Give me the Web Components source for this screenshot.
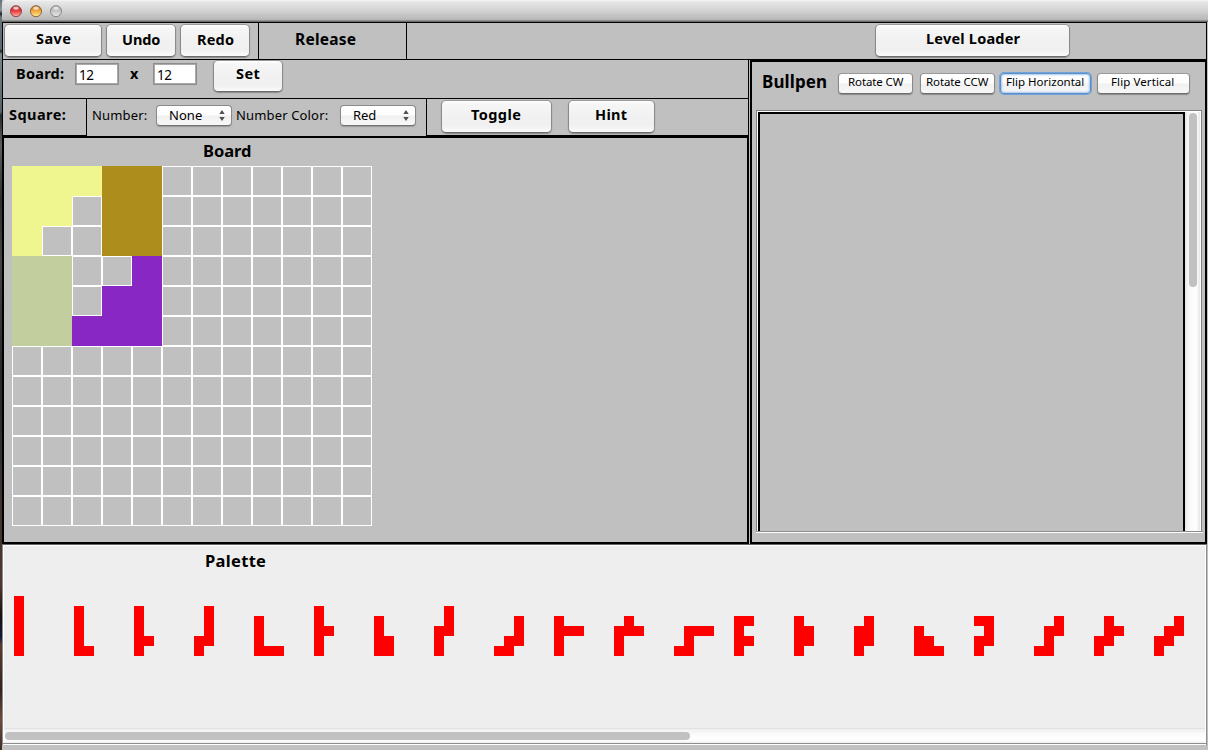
<!DOCTYPE html>
<html lang="en">
<head>
<meta charset="utf-8">
<title>Level Editor</title>
<style>
html,body{margin:0;height:100%;overflow:hidden}
body{font-family:"Noto Sans","Open Sans",sans-serif;color:#000;background:#c0c0c0}
</style>
</head>
<body>
<level-editor></level-editor>
<script>
function define(name, html, setup) {
  const template = document.createElement('template');
  template.innerHTML = html;
  customElements.define(name, class extends HTMLElement {
    connectedCallback() {
      if (this.shadowRoot) return;
      this.attachShadow({ mode: 'open' }).append(template.content.cloneNode(true));
      if (setup) setup(this, this.shadowRoot);
    }
  });
}

/* Text set to a fixed measure by tracking: w = width, s = size, b = bold */
define('ui-text', `<style>
:host{display:block;flex:none;white-space:pre;line-height:20px;height:20px}
:host([b]:not([s])){line-height:18px}
span{display:inline-block}
</style><span><slot></slot></span>`, (host, root) => {
  const span = root.querySelector('span');
  host.style.fontSize = (host.getAttribute('s') || 14.5) + 'px';
  if (host.hasAttribute('b')) host.style.fontWeight = 700;
  const w = +host.getAttribute('w');
  if (w) {
    host.style.width = w + 'px';
    const n = host.textContent.length;
    const natural = span.getBoundingClientRect().width;
    span.style.letterSpacing = ((w - .7 - natural) / n) + 'px';
  }
});

define('push-button', `<style>
:host{display:block;flex:none;box-sizing:border-box;border-radius:5px;border:1px solid #8a8a8a;border-top-color:#999;border-bottom-color:#6c6c6c;
background:linear-gradient(#fff 0,#f6f6f6 10%,#f1f1f1 50%,#f0f0f0 80%,#fbfbfb 100%);box-shadow:0 1px 1px rgba(0,0,0,.28)}
:host([small]){border-radius:4px;background:linear-gradient(#fff 0,#fdfdfd 48%,#f0f0f0 52%,#f8f8f8 100%)}
:host([focused]){border-color:#5c8dc4;box-shadow:0 0 0 1px #6fa3da,inset 0 0 2px 1px #a3c8ee}
</style><slot></slot>`);

define('number-field', `<style>
:host{display:block;flex:none;box-sizing:border-box;width:44px;height:22px;border:1px solid #8c8c8c;background:#fff;box-shadow:inset 0 0 0 1px #aaa;padding:1px 0 0 3px}
</style><slot></slot>`);

define('popup-select', `<style>
:host{display:flex;flex:none;box-sizing:border-box;height:21px;border:1px solid #8a8a8a;border-bottom-color:#717171;border-radius:4px;background:linear-gradient(#fff 0,#fdfdfd 48%,#f0f0f0 52%,#f8f8f8);box-shadow:0 1px 1px rgba(0,0,0,.2);padding-left:12px;justify-content:space-between}
::slotted(ui-text){margin-top:-1px}
svg{margin:4px 6px 0 0}
</style><slot></slot><svg width="6" height="12"><path d="M.3 4 3 0 5.7 4zM.3 7 3 11 5.7 7z" fill="#505050"/></svg>`);

define('title-bar', `<style>
:host{display:flex;flex:none;box-sizing:border-box;height:22px;padding:5px 0 0 8px;gap:8px;background:linear-gradient(#f4f4f4 0,#e6e6e6 2px,#d2d2d2 11px,#b6b6b6 20px,#6b6b6b 21px);border-top-left-radius:4px}
</style>
<svg width="60" height="13">
<defs>
<linearGradient id="r" x2="0" y2="1"><stop stop-color="#a82b2e"/><stop offset=".45" stop-color="#e8383c"/><stop offset="1" stop-color="#ffb0a8"/></linearGradient>
<linearGradient id="o" x2="0" y2="1"><stop stop-color="#b36a1e"/><stop offset=".45" stop-color="#f2a43a"/><stop offset="1" stop-color="#ffee9a"/></linearGradient>
<linearGradient id="g" x2="0" y2="1"><stop stop-color="#a8a8a8"/><stop offset=".45" stop-color="#c4c4c4"/><stop offset="1" stop-color="#e8e8e8"/></linearGradient>
</defs>
<circle cx="6" cy="6.2" r="5.5" fill="url(#r)" stroke="#8a4745"/><ellipse cx="6" cy="3.2" rx="2.8" ry="1.6" fill="#fff" opacity=".7"/>
<circle cx="26" cy="6.2" r="5.5" fill="url(#o)" stroke="#8d6532"/><ellipse cx="26" cy="3.2" rx="2.8" ry="1.6" fill="#fff" opacity=".7"/>
<circle cx="46" cy="6.2" r="5.5" fill="url(#g)" stroke="#858585"/><ellipse cx="46" cy="3.2" rx="2.8" ry="1.6" fill="#fff" opacity=".65"/>
</svg>`);

define('main-toolbar', `<style>
:host{display:flex;flex:none;box-sizing:border-box;height:38px;border:1px solid #000;align-items:flex-start;margin-right:1px}
.c{display:flex;box-sizing:border-box;height:36px}
.a{width:256px;border-right:1px solid #000;padding:1px 0 0 1px;gap:4px}
.b{width:148px;border-right:1px solid #000;padding:6px 0 0 36px}
.d{flex:1;padding:1px 0 0 468px}
push-button{height:33px}
</style>
<div class="c a">
<push-button style="width:98px;padding:4px 0 0 31px"><ui-text b w="36">Save</ui-text></push-button>
<push-button style="width:70px;padding:5px 0 0 15px"><ui-text b w="39">Undo</ui-text></push-button>
<push-button style="width:70px;padding:5px 0 0 16px"><ui-text b w="38">Redo</ui-text></push-button>
</div>
<div class="c b"><ui-text b s="15.5" w="62">Release</ui-text></div>
<div class="c d"><push-button style="width:195px;padding:4px 0 0 50px"><ui-text b w="95">Level Loader</ui-text></push-button></div>`);

define('board-size-bar', `<style>
:host{display:flex;flex:none;box-sizing:border-box;height:39px;border:1px solid #000;border-top:0;padding:3px 0 0 13px}
ui-text{margin-top:1px}
number-field ui-text{margin:0}
push-button{width:70px;height:32px;margin:-3px 0 0 16px;padding:2px 0 0 22px}
</style>
<ui-text b w="49">Board:</ui-text>
<number-field style="margin-left:10px"><ui-text s="13.5" w="15">12</ui-text></number-field>
<ui-text b w="9" style="margin-left:11px">x</ui-text>
<number-field style="margin-left:14px"><ui-text s="13.5" w="15">12</ui-text></number-field>
<push-button><ui-text b w="25">Set</ui-text></push-button>`);

define('square-bar', `<style>
:host{display:flex;flex:none;box-sizing:border-box;height:37px;border-left:1px solid #000;border-right:1px solid #000}
div{display:flex;box-sizing:border-box;height:37px}
.a{width:84px;border-right:1px solid #000;border-bottom:1px solid #000;padding:6px 0 0 6px}
.b{width:340px;border-right:1px solid #000;padding:6px 0 0 5px}
.c{flex:1;border-bottom:1px solid #000;padding:1px 0 0 14px;gap:16px}
.c push-button{height:33px}
</style>
<div class="a"><ui-text b w="58">Square:</ui-text></div>
<div class="b"><ui-text s="13" w="56">Number:</ui-text>
<popup-select style="width:76px;margin-left:8px"><ui-text s="13" w="34">None</ui-text></popup-select>
<ui-text s="13" w="93" style="margin-left:4px">Number Color:</ui-text>
<popup-select style="width:76px;margin-left:11px"><ui-text s="13" w="24">Red</ui-text></popup-select></div>
<div class="c"><push-button style="width:111px;padding:4px 0 0 29px"><ui-text b w="51">Toggle</ui-text></push-button>
<push-button style="width:87px;padding:4px 0 0 26px"><ui-text b w="33">Hint</ui-text></push-button></div>`);

/* y = yellow, b = brown, s = sage, p = purple, . = open square */
const BOARD = ['yyybb', 'yy.bb', 'y..bb', 'ss..p', 'ss.pp', 'ssppp'];
define('puzzle-board', `<style>
:host{display:block;flex:1;box-sizing:border-box;border:2px solid #000}
ui-text{margin:3px 0 0 199px}
.g{display:grid;grid-template:repeat(12,30px)/repeat(12,30px);margin:5px 0 0 8px}
i{box-sizing:border-box;border:1px solid #fff}
.y,.b,.s,.p{border:0}
.y{background:#f0f68f}.b{background:#ad8d1c}.s{background:#c2ce9e}.p{background:#8827c3}
</style><ui-text b s="16.5" w="49">Board</ui-text><div class="g"></div>`, (host, root) => {
  const grid = root.querySelector('.g');
  for (let r = 0; r < 12; r++) for (let c = 0; c < 12; c++) {
    const cell = document.createElement('i');
    const k = (BOARD[r] || '')[c];
    if (k && k !== '.') cell.className = k;
    grid.append(cell);
  }
});

define('bull-pen', `<style>
:host{display:flex;flex-direction:column;flex:none;box-sizing:border-box;width:457px;height:484px;border:2px solid #000;margin:0 0 0 1px;padding:0 3px 9px 4px}
header{display:flex;flex:none;height:48px;box-sizing:border-box;padding:11px 0 0 6px}
push-button{height:21px}
push-button ui-text{margin-top:-2px}
.v{flex:1;display:flex;box-sizing:border-box;border:1px solid #828282;border-bottom:0;box-shadow:inset 1px 1px #fff,inset -1px 0 #fff;padding:1px 1px 0;min-height:0}
.in{flex:1;border:2px solid #000;border-bottom:0}
.t{width:15px;box-sizing:border-box;background:linear-gradient(90deg,#e4e4e4,#f6f6f6 3px,#fdfdfd 9px,#fbfbfb 12px,#e6e6e6);padding:1px 0 0 4px}
.t div{width:8px;height:174px;border-radius:4px;background:#c1c1c1}
.bt{height:2px;flex:none;background:linear-gradient(#8e8e8e 50%,#fff 50%);margin-right:-1px}
</style>
<header><ui-text b s="17" w="66" style="margin-top:-1px">Bullpen</ui-text>
<push-button small style="width:75px;margin-left:10px;padding-left:9px"><ui-text s="11.5" w="56">Rotate CW</ui-text></push-button>
<push-button small style="width:75px;margin-left:7px;padding-left:5px"><ui-text s="11.5" w="63">Rotate CCW</ui-text></push-button>
<push-button small focused style="width:91px;margin-left:5px;padding-left:5px"><ui-text s="11.5" w="79">Flip Horizontal</ui-text></push-button>
<push-button small style="width:93px;margin-left:6px;padding-left:13px"><ui-text s="11.5" w="64">Flip Vertical</ui-text></push-button>
</header>
<div class="v"><div class="in"></div><div class="t"><div></div></div></div><div class="bt"></div>`);

const PIECES = ['1/1/1/1/1/1','1/1/1/1/11','1/1/1/11/1','01/01/01/11/1','1/1/1/111','1/1/11/1/1','1/1/11/11','01/01/11/1/1','001/001/011/11','1/111/1/1','01/111/1/1','0111/01/11','11/1/11/1','1/11/11/1','01/11/11/1','1/11/111','11/01/11/1','001/011/01/11','01/011/11/1','001/011/11/1'];
define('piece-shape', `<style>:host{display:block;flex:none;width:60px;height:60px}svg{display:block}</style><svg width="60" height="60" shape-rendering="crispEdges"><path fill="#f00"/></svg>`, (host, root) => {
  const rows = host.getAttribute('cells').split('/');
  const top = 60 - rows.length * 10;
  let d = '';
  rows.forEach((row, y) => [...row].forEach((c, x) => { if (c === '1') d += `M${x * 10} ${top + y * 10}h10v10h-10z`; }));
  root.querySelector('path').setAttribute('d', d);
});

define('piece-palette', `<style>
:host{display:flex;flex-direction:column;flex:none;box-sizing:border-box;height:201px;margin-right:1px;background:#eee;border:1px solid #8c8c8c;border-top-color:#666;border-bottom:0}
.w{flex:1;border:1px solid #fff;border-bottom:0;min-height:0;overflow:hidden;display:flex;flex-direction:column}
.w ui-text{margin:5px 0 0 201px}
.r{display:flex;margin:25px 0 0 10px}
.t{margin-top:auto;flex:none;height:15px;box-sizing:border-box;border-top:1px solid #e2e2e2;background:linear-gradient(#efefef,#fafafa 5px,#fff 10px,#f8f8f8 13px,#e8e8e8 14px);padding:3px 0 0 1px}
.t div{width:685px;height:8px;border-radius:4px;background:#c1c1c1}
.bt{height:2px;flex:none;background:linear-gradient(#8e8e8e 50%,#fff 50%)}
</style><div class="w"><ui-text b s="16.5" w="62">Palette</ui-text><div class="r"></div><div class="t"><div></div></div></div><div class="bt"></div>`, (host, root) => {
  const row = root.querySelector('.r');
  for (const p of PIECES) { const el = document.createElement('piece-shape'); el.setAttribute('cells', p); row.append(el); }
});

define('level-editor', `<style>
:host{display:flex;width:1208px;height:750px;overflow:hidden}
.desk{width:2px;flex:none;background:linear-gradient(#657078 0,#8b969b 10px,#1e2428 14px,#68747a 17px,#5c686d 49px,#20262a 51px,#7b868a 54px,#566165 112px,#252b2d 115px,#5a6061 145px,#2b2f2f 200px,#444 260px,#282828 380px,#3d3430 500px,#51382d 585px,#14100f 615px,#12183a 637px,#5c3b2c 645px,#35241d 690px,#6e4d3c 720px,#3e2b23 750px)}
.win{flex:1;min-width:0;display:flex;flex-direction:column;background:#c0c0c0;height:750px}
.mid{display:flex;flex:none;height:484px;margin-right:1px}
.l{flex:1;display:flex;flex-direction:column;min-width:0}
</style>
<div class="desk"></div>
<div class="win"><title-bar></title-bar><main-toolbar></main-toolbar>
<div class="mid"><div class="l"><board-size-bar></board-size-bar><square-bar></square-bar><puzzle-board></puzzle-board></div><bull-pen></bull-pen></div>
<piece-palette></piece-palette></div>`);
</script>
</body>
</html>
